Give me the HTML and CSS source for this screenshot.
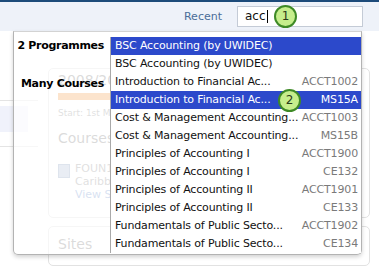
FILE: index.html
```html
<!DOCTYPE html>
<html lang="en">

<head>
    <meta charset="UTF-8">
    <title>Course Search</title>
    <link rel="stylesheet" href="styles.css">
</head>

<body>
    <div class="top-line"></div>
    <header class="header">
        <a href="#" class="recent-link">Recent</a>
        <div class="search-box">acc<span class="caret"></span></div>
    </header>

    <div class="page">
        <div class="sidebar">
            <div class="side-line"></div>
            <div class="side-item"></div>
            <div class="side-line lower"></div>
        </div>
        <div class="main">
            <div class="card">
                <div class="card-body">
                    <div class="year">2008/2009</div>
                    <div class="progress"></div>
                    <div class="start">Start: 1st March</div>
                    <div class="card-title">Courses</div>
                    <div class="course">
                        <span class="course-icon"></span>
                        <div class="course-text">
                            <div>FOUN1001</div>
                            <div>Caribbean</div>
                            <div class="link">View Stream</div>
                        </div>
                    </div>
                </div>
            </div>
            <div class="card sites">
                <div class="card-title">Sites</div>
            </div>
        </div>
    </div>

    <!-- search results dropdown -->
    <div class="dropdown">
        <div class="group">
            <div class="group-label">2 Programmes</div>
            <ul class="group-items">
                <li class="selected"><span class="name">BSC Accounting (by UWIDEC)</span></li>
                <li><span class="name">BSC Accounting (by UWIDEC)</span></li>
            </ul>
        </div>
        <div class="group">
            <div class="group-label courses-label">Many Courses</div>
            <ul class="group-items">
                <li><span class="name">Introduction to Financial Ac...</span><span class="code">ACCT1002</span></li>
                <li class="selected"><span class="name">Introduction to Financial Ac...</span><span class="code">MS15A</span></li>
                <li><span class="name">Cost &amp; Management Accounting...</span><span class="code">ACCT1003</span></li>
                <li><span class="name">Cost &amp; Management Accounting...</span><span class="code">MS15B</span></li>
                <li><span class="name">Principles of Accounting I</span><span class="code">ACCT1900</span></li>
                <li><span class="name">Principles of Accounting I</span><span class="code">CE132</span></li>
                <li><span class="name">Principles of Accounting II</span><span class="code">ACCT1901</span></li>
                <li><span class="name">Principles of Accounting II</span><span class="code">CE133</span></li>
                <li><span class="name">Fundamentals of Public Secto...</span><span class="code">ACCT1902</span></li>
                <li><span class="name">Fundamentals of Public Secto...</span><span class="code">CE134</span></li>
            </ul>
        </div>
    </div>

    <!-- step markers -->
    <div class="step step-one">1</div>
    <div class="step step-two">2</div>
</body>

</html>
```

FILE: styles.css
```css
body {
    font-family: 'DejaVu Sans', sans-serif;
    font-size: 11px;
    color: #111;
    margin: 0;
    width: 379px;
    height: 267px;
    overflow: hidden;
    background-color: #fff;
    position: relative;
}

.top-line {
    height: 2px;
    background-color: #1d4b7a;
}

.header {
    height: 29px;
    background-color: #eef2f9;
    display: flex;
    justify-content: flex-end;
    align-items: center;
    gap: 15px;
    padding-right: 16px;
}

.recent-link {
    color: #4a6d98;
    text-decoration: none;
    font-size: 11px;
}

.search-box {
    width: 126px;
    height: 21px;
    box-sizing: border-box;
    border: 1px solid #c4cbd6;
    background-color: #fff;
    padding-left: 7px;
    font-size: 12px;
    line-height: 19px;
    display: flex;
    align-items: center;
}

.caret {
    width: 1px;
    height: 13px;
    background-color: #000;
    margin-left: 1px;
}

/* page behind the dropdown */
.page {
    display: flex;
}

.sidebar {
    width: 38px;
    padding-top: 69px;
}

.side-line {
    border-top: 1px solid #e4e4e4;
}

.side-line.lower {
    margin-top: 14px;
}

.side-item {
    width: 28px;
    height: 26px;
    margin-top: 5px;
    background-color: #f0f2fb;
}

.main {
    margin-left: 10px;
    margin-top: 37px;
    width: 322px;
    display: flex;
    flex-direction: column;
    gap: 8px;
}

.card {
    height: 150px;
    box-sizing: border-box;
    border: 1px solid #e2e2e2;
    border-radius: 5px;
    padding: 2px 9px;
    color: #555;
}

/* only the strip left of the list shows through */
.card-body {
    width: 52px;
    overflow: hidden;
    white-space: nowrap;
}

.year {
    font-size: 14px;
    line-height: 18px;
    color: #888;
}

.progress {
    width: 200px;
    height: 7px;
    margin-top: 4px;
    background-color: #f3a458;
}

.start {
    font-size: 9px;
    color: #999;
    margin-top: 8px;
}

.card-title {
    font-size: 14px;
    color: #888;
    margin-top: 12px;
}

.course {
    display: flex;
    gap: 5px;
    margin-top: 16px;
    font-size: 11px;
    line-height: 13px;
    color: #999;
}

.course-icon {
    flex: none;
    width: 10px;
    height: 12px;
    background-color: #b6c4db;
    border: 1px solid #8fa3c3;
    margin-top: 2px;
}

.course-text {
    overflow: hidden;
}

.course-text .link {
    color: #7d9bd0;
}

.sites {
    height: 40px;
}

.sites .card-title {
    margin-top: 7px;
}

/* search results dropdown */
.dropdown {
    position: absolute;
    left: 13px;
    top: 31px;
    width: 349px;
    height: 224px;
    box-sizing: border-box;
    border: 1px solid #b3b3b3;
    border-top-color: #d3d3d3;
    border-radius: 0 0 5px 5px;
    background-color: rgba(255, 255, 255, 0.7);
    box-shadow: 0 2px 4px rgba(0, 0, 0, 0.18);
    padding-top: 5px;
}

.group {
    display: flex;
}

.group-label {
    width: 96px;
    box-sizing: border-box;
    text-align: right;
    padding-right: 6px;
    font-weight: bold;
    line-height: 18px;
    color: #000;
    white-space: nowrap;
    letter-spacing: -0.3px;
}

.courses-label {
    padding-top: 2px;
}

.group-items {
    flex: 1;
    min-width: 0;
    list-style-type: none;
    margin: 0;
    padding: 0;
    border-left: 1px solid #a9a9a9;
    background-color: #fff;
}

.group-items li {
    height: 18px;
    line-height: 18px;
    display: flex;
    justify-content: space-between;
    padding: 0 3px 0 4px;
    color: #111;
    white-space: nowrap;
    letter-spacing: -0.15px;
}

.group-items .code {
    color: #7a7a7a;
}

.group-items li.selected {
    background-color: #2c49cb;
    color: #fff;
}

.group-items li.selected .code {
    color: #fff;
}

.step {
    position: absolute;
    width: 19px;
    height: 19px;
    border-radius: 50%;
    border: 2px solid #3e8a26;
    background-color: #c6ee8c;
    color: #2a3a1a;
    font-size: 12px;
    line-height: 19px;
    text-align: center;
}

.step-one {
    left: 274px;
    top: 5px;
}

.step-two {
    left: 278px;
    top: 89px;
}
```
